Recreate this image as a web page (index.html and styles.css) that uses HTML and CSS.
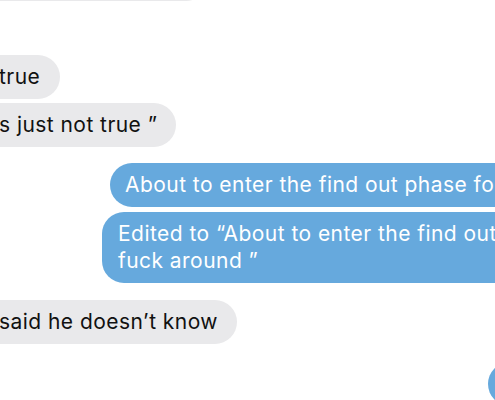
FILE: index.html
```html
<!DOCTYPE html>
<html lang="en">
  <head>
    <meta charset="UTF-8" />
    <meta name="viewport" content="width=device-width, initial-scale=1.0" />
    <title>Messages</title>
    <link rel="stylesheet" href="styles.css">
  </head>
  <body>
    <div class="thread">
      <div class="bubble in first"></div>
      <div class="bubble in true">true</div>
      <div class="bubble in quote">s just not true ”</div>
      <div class="bubble out one">About to enter the find out phase for</div>
      <div class="bubble out two">Edited to “About to enter the find out phase for<br>fuck around ”</div>
      <div class="bubble in know">said he doesn’t know</div>
      <div class="bubble out last"></div>
    </div>
  </body>
</html>
```

FILE: styles.css
```css
* {
  margin: 0;
  padding: 0;
  box-sizing: border-box;
}
html,
body {
  width: 495px;
  height: 400px;
  overflow: hidden;
  background: #fff;
}
.thread {
  display: flex;
  flex-direction: column;
  align-items: flex-start;
  font-family: Inter, "Liberation Sans", sans-serif;
  font-size: 21px;
  letter-spacing: 0.45px;
  line-height: 27px;
}
.bubble {
  padding: 8px 15px 9px;
  border-radius: 22px;
  min-height: 44px;
  white-space: nowrap;
}
.bubble.in {
  background-color: #e9e9eb;
  color: #111;
  margin-left: -30px;
  padding-left: 29px;
}
.bubble.out {
  background-color: #66a9dd;
  color: #fff;
}
.first {
  width: 238px;
  margin-top: -43px;
}
.true {
  margin-top: 54px;
  padding-right: 20px;
}
.quote {
  margin-top: 4px;
  padding-right: 19px;
}
.one {
  margin-top: 16px;
  margin-left: 110px;
}
.two {
  margin-top: 5px;
  margin-left: 102px;
  padding-left: 16px;
}
.know {
  margin-top: 17px;
  padding-right: 19px;
}
.last {
  margin-top: 18px;
  margin-left: 488px;
  width: 120px;
}
```
